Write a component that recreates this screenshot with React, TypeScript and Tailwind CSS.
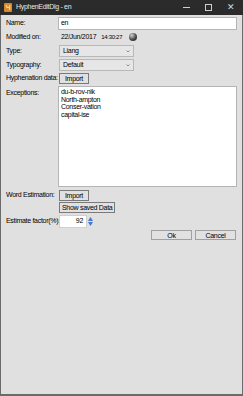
export default function App() {
  const font = { fontFamily: '"Liberation Sans", Arial, sans-serif' };
  return (
    <div className="w-[243px] h-[396px] bg-[#6b6b6b] flex flex-col text-[7px] tracking-[-0.3px] text-black" style={font}>
      {/* title bar */}
      <div className="h-[15px] bg-[#2b2b2b] flex items-center pl-[4px] shrink-0">
        <div className="w-[8px] h-[9px] bg-[#d9862c] rounded-[1px] flex items-center justify-center text-[7px] font-bold text-[#f4e2c0] leading-none">
          Ч
        </div>
        <span className="ml-[4px] text-[7px] text-[#e6e6e6]">HyphenEditDlg - en</span>
        <div className="ml-auto flex items-center h-full">
          <div className="w-[22px] flex justify-center">
            <div className="w-[7px] h-px bg-[#cfcfcf]" />
          </div>
          <div className="w-[22px] flex justify-center">
            <div className="w-[7px] h-[7px] border border-[#cfcfcf]" />
          </div>
          <div className="w-[24px] flex justify-center text-[#d8d8d8] text-[9px] leading-none">✕</div>
        </div>
      </div>
      {/* body */}
      <div className="flex-1 mx-px mb-[2px] bg-[#e0e0e0] px-[5px] pt-[2px] flex flex-col">
        <Row label="Name:" h="h-[13px]">
          <div className="flex-1 h-[13px] bg-white border border-[#b5b5b5] px-[2px] leading-[9px]">en</div>
        </Row>
        <Row label="Modified on:" h="h-[14px]">
          <span className="ml-[3px]">22/Jun/2017</span>
          <span className="ml-[5px] text-[6px]">14:30:27</span>
          <div className="ml-[7px] w-[8px] h-[8px] rounded-full bg-[radial-gradient(circle_at_35%_30%,#d0d0d0,#4a4a4a_55%,#1a1a1a)]" />
        </Row>
        <Row label="Type:" h="h-[14px]">
          <Select value="Liang" />
        </Row>
        <Row label="Typography:" h="h-[14px]">
          <Select value="Default" />
        </Row>
        <Row label="Hyphenation data:" h="h-[12px]">
          <Button>Import</Button>
        </Row>
        <div className="flex mt-[2px]">
          <div className="w-[52px] shrink-0 pt-[2px]">Exceptions:</div>
          <div className="flex-1 h-[101px] bg-white border border-[#b5b5b5] px-[2px] leading-[7.5px] pt-[1px]">
            <div>du-b-rov-nik</div>
            <div>North-ampton</div>
            <div>Conser-vation</div>
            <div>capital-ise</div>
          </div>
        </div>
        <div className="h-[3px]" />
        <Row label="Word Estimation:" h="h-[11px]">
          <Button>Import</Button>
        </Row>
        <Row label="" h="h-[12px]">
          <div className="ml-px h-[11px] px-[2px] border border-[#7a7a7a] bg-[#e1e1e1] flex items-center leading-none">
            Show saved Data
          </div>
        </Row>
        <Row label="Estimate factor(%):" h="h-[16px]">
          <div className="ml-px w-[28px] h-[13px] bg-white border border-[#d0d0d0] flex items-center justify-end pr-[3px]">92</div>
          <div className="flex flex-col ml-px gap-[1px]">
            <svg width="5" height="4" viewBox="0 0 5 4"><path d="M0 4 L2.5 0 L5 4Z" fill="#4a78c8" /></svg>
            <svg width="5" height="4" viewBox="0 0 5 4"><path d="M0 0 L2.5 4 L5 0Z" fill="#4a78c8" /></svg>
          </div>
        </Row>
        <div className="flex justify-end gap-[3px] mt-px pr-[1px]">
          <div className="w-[41px] h-[10px] border border-[#a0a0a0] bg-[#e1e1e1] flex items-center justify-center leading-none">Ok</div>
          <div className="w-[41px] h-[10px] border border-[#a0a0a0] bg-[#e1e1e1] flex items-center justify-center leading-none">Cancel</div>
        </div>
      </div>
    </div>
  );
}

function Row({ label, h, children }: { label: string; h: string; children: React.ReactNode }) {
  return (
    <div className={`flex items-center ${h}`}>
      <div className="w-[52px] shrink-0 whitespace-nowrap">{label}</div>
      {children}
    </div>
  );
}

function Select({ value }: { value: string }) {
  return (
    <div className="ml-px w-[75px] h-[12px] border border-[#b8b8b8] bg-[#e6e6e6] flex items-center px-[3px]">
      <span>{value}</span>
      <svg className="ml-auto" width="4" height="3" viewBox="0 0 4 3">
        <path d="M0.5 0.5 L2 2 L3.5 0.5" stroke="#777" strokeWidth="0.8" fill="none" />
      </svg>
    </div>
  );
}

function Button({ children }: { children: React.ReactNode }) {
  return (
    <div className="ml-px h-[11px] w-[30px] border border-[#7a7a7a] bg-[#e1e1e1] flex items-center justify-center leading-none">
      {children}
    </div>
  );
}
